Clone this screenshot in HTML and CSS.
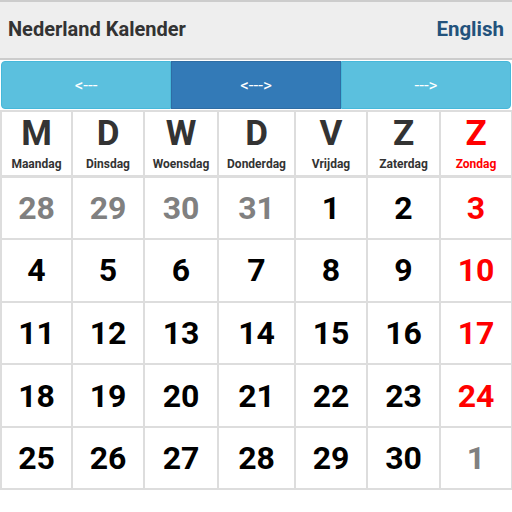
FILE: index.html
```html
<!DOCTYPE html>
<html lang="nl">
<head>
  <meta charset="UTF-8">
  <meta name="viewport" content="width=device-width, initial-scale=1.0">
  <title>Nederland Kalender</title>
  <link rel="stylesheet" href="styles.css">
</head>
<body>
  <!-- Title bar -->
  <div class="topbar">
    <span class="title">Nederland Kalender</span>
    <a class="lang" href="#">English</a>
  </div>

  <!-- Month navigation -->
  <div class="nav-group">
    <button class="btn btn-info">&lt;---</button>
    <button class="btn btn-primary">&lt;---&gt;</button>
    <button class="btn btn-info">---&gt;</button>
  </div>

  <!-- Calendar -->
  <table class="calendar">
    <colgroup>
      <col class="col-ma">
      <col class="col-di">
      <col class="col-wo">
      <col class="col-do">
      <col class="col-vr">
      <col class="col-za">
      <col class="col-zo">
    </colgroup>
    <thead>
      <tr>
        <th><span class="letter">M</span><span class="dayname">Maandag</span></th>
        <th><span class="letter">D</span><span class="dayname">Dinsdag</span></th>
        <th><span class="letter">W</span><span class="dayname">Woensdag</span></th>
        <th><span class="letter">D</span><span class="dayname">Donderdag</span></th>
        <th><span class="letter">V</span><span class="dayname">Vrijdag</span></th>
        <th><span class="letter">Z</span><span class="dayname">Zaterdag</span></th>
        <th class="sunday"><span class="letter">Z</span><span class="dayname">Zondag</span></th>
      </tr>
    </thead>
    <tbody>
      <tr>
        <td class="other">28</td><td class="other">29</td><td class="other">30</td><td class="other">31</td>
        <td>1</td><td>2</td><td class="sunday">3</td>
      </tr>
      <tr>
        <td>4</td><td>5</td><td>6</td><td>7</td><td>8</td><td>9</td><td class="sunday">10</td>
      </tr>
      <tr>
        <td>11</td><td>12</td><td>13</td><td>14</td><td>15</td><td>16</td><td class="sunday">17</td>
      </tr>
      <tr>
        <td>18</td><td>19</td><td>20</td><td>21</td><td>22</td><td>23</td><td class="sunday">24</td>
      </tr>
      <tr>
        <td>25</td><td>26</td><td>27</td><td>28</td><td>29</td><td>30</td><td class="other">1</td>
      </tr>
    </tbody>
  </table>
</body>
</html>
```

FILE: styles.css
```css
body {
  margin: 0;
  padding: 0;
  background-color: #ffffff;
  font-family: Roboto, 'Liberation Sans', sans-serif;
}

.topbar {
  height: 60px;
  box-sizing: border-box;
  background-color: #eeeeee;
  border-top: 2px solid #cccccc;
  border-bottom: 2px solid #cccccc;
  display: flex;
  align-items: center;
  justify-content: space-between;
  padding: 0 8px 2px;
}

.title {
  font-size: 20px;
  font-weight: bold;
  color: #333333;
}

.lang {
  font-size: 20.5px;
  font-weight: bold;
  color: #23527c;
  text-decoration: none;
}

.nav-group {
  display: flex;
  margin: 1px;
  height: 48px;
}

.btn {
  flex: 1;
  border: 1px solid;
  font-family: Roboto, 'Liberation Sans', sans-serif;
  font-size: 17px;
  color: #ffffff;
  padding: 0;
  margin: 0;
}

.btn-info {
  background-color: #5bc0de;
  border-color: #46b8da;
}

.btn-primary {
  background-color: #337ab7;
  border-color: #2e6da4;
}

.nav-group .btn:first-child {
  border-radius: 4px 0 0 4px;
}

.nav-group .btn:last-child {
  border-radius: 0 4px 4px 0;
}

.calendar {
  width: 100%;
  table-layout: fixed;
  border-collapse: collapse;
  margin-top: 1px;
}

.col-ma { width: 71px; }
.col-di { width: 72px; }
.col-wo { width: 74px; }
.col-do { width: 77px; }
.col-vr { width: 72px; }
.col-za { width: 73px; }
.col-zo { width: 72px; }

.calendar th,
.calendar td {
  border: 2px solid #dddddd;
  text-align: center;
  padding: 0;
}

.calendar th {
  height: 62.5px;
  color: #333333;
  border-bottom-width: 3px;
}

.calendar td {
  height: 60.6px;
  font-size: 32px;
  font-weight: bold;
  color: #000000;
}

.letter {
  display: block;
  font-size: 35px;
  line-height: 40px;
}

.dayname {
  display: block;
  font-size: 12px;
  line-height: 16px;
  margin-top: 2px;
}

.calendar .other {
  color: #808080;
}

.calendar .sunday {
  color: #ff0000;
}
```
